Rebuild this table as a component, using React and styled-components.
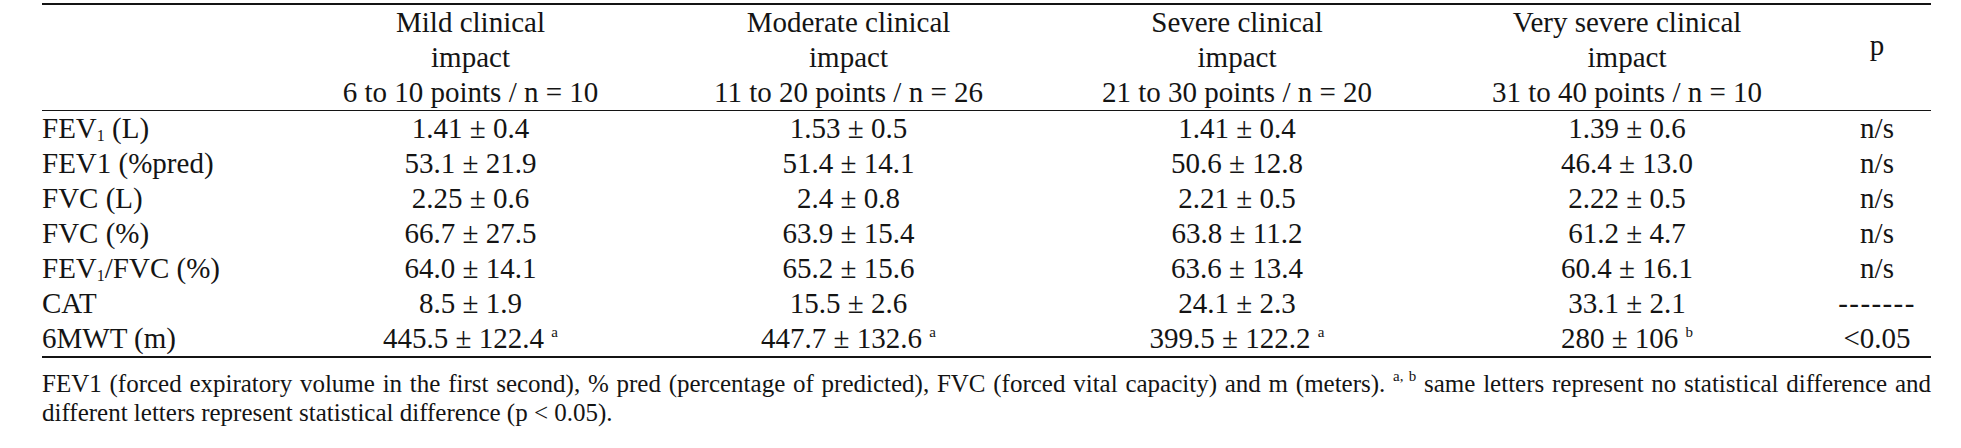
import React from "react";
import styled, { createGlobalStyle } from "styled-components";

const SERIF = `"Liberation Serif", "DejaVu Serif", "Noto Serif", serif`;

const Global = createGlobalStyle`
  html, body { margin: 0; padding: 0; background: #ffffff; }
  body {
    font-family: ${SERIF};
    color: #141414;
  }
`;

const COLS = "245px 367px 389px 388px 392px 108px";

const Page = styled.div`
  width: 1889px;
  padding: 3px 0 0 42px;
  font-family: ${SERIF};
  color: #141414;
`;

const Table = styled.div`
  border-top: 2px solid #141414;
  border-bottom: 2px solid #141414;
`;

const HeadRow = styled.div`
  display: grid;
  grid-template-columns: ${COLS};
  border-bottom: 1px solid #141414;
  font-size: 29px;
  line-height: 35px;
`;

const HeadCell = styled.div`
  text-align: center;
  align-self: ${(p) => (p.$middle ? "center" : "start")};
  padding-bottom: ${(p) => (p.$middle ? "24px" : "0")};
`;

const Row = styled.div`
  display: grid;
  grid-template-columns: ${COLS};
  font-size: 29px;
  line-height: 35px;
`;

const Cell = styled.div`
  text-align: ${(p) => p.$align || "center"};
  white-space: nowrap;
  letter-spacing: ${(p) => (p.$dash ? "1.4px" : "normal")};
`;

const Sub = styled.sub`
  font-size: 16px;
  line-height: 0;
  vertical-align: -3px;
`;

const Sup = styled.sup`
  font-size: 15px;
  line-height: 0;
  vertical-align: 11px;
`;

const Note = styled.p`
  margin: 11px 0 0 0;
  font-size: 25px;
  line-height: 29px;
  text-align: justify;
`;

const headers = [
  ["Mild clinical", "impact", "6 to 10 points / n = 10"],
  ["Moderate clinical", "impact", "11 to 20 points / n = 26"],
  ["Severe clinical", "impact", "21 to 30 points / n = 20"],
  ["Very severe clinical", "impact", "31 to 40 points / n = 10"],
];

const fev1 = (
  <>
    FEV<Sub>1</Sub>
  </>
);

const rows = [
  [<>{fev1} (L)</>, "1.41 ± 0.4", "1.53 ± 0.5", "1.41 ± 0.4", "1.39 ± 0.6", "n/s"],
  ["FEV1 (%pred)", "53.1 ± 21.9", "51.4 ± 14.1", "50.6 ± 12.8", "46.4 ± 13.0", "n/s"],
  ["FVC (L)", "2.25 ± 0.6", "2.4 ± 0.8", "2.21 ± 0.5", "2.22 ± 0.5", "n/s"],
  ["FVC (%)", "66.7 ± 27.5", "63.9 ± 15.4", "63.8 ± 11.2", "61.2 ± 4.7", "n/s"],
  [<>{fev1}/FVC (%)</>, "64.0 ± 14.1", "65.2 ± 15.6", "63.6 ± 13.4", "60.4 ± 16.1", "n/s"],
  ["CAT", "8.5 ± 1.9", "15.5 ± 2.6", "24.1 ± 2.3", "33.1 ± 2.1", "-------"],
  [
    "6MWT (m)",
    <>445.5 ± 122.4 <Sup>a</Sup></>,
    <>447.7 ± 132.6 <Sup>a</Sup></>,
    <>399.5 ± 122.2 <Sup>a</Sup></>,
    <>280 ± 106 <Sup>b</Sup></>,
    "<0.05",
  ],
];

export default function App() {
  return (
    <Page>
      <Global />
      <Table>
        <HeadRow>
          <HeadCell />
          {headers.map((h, i) => (
            <HeadCell key={i}>
              {h[0]}
              <br />
              {h[1]}
              <br />
              {h[2]}
            </HeadCell>
          ))}
          <HeadCell $middle>p</HeadCell>
        </HeadRow>
        {rows.map((r, i) => (
          <Row key={i}>
            {r.map((c, j) => (
              <Cell
                key={j}
                $align={j === 0 ? "left" : "center"}
                $dash={c === "-------"}
              >
                {c}
              </Cell>
            ))}
          </Row>
        ))}
      </Table>
      <Note>
        FEV1 (forced expiratory volume in the first second), % pred (percentage of
        predicted), FVC (forced vital capacity) and m (meters). <Sup>a, b</Sup> same
        letters represent no statistical difference and different letters represent
        statistical difference (p &lt; 0.05).
      </Note>
    </Page>
  );
}
